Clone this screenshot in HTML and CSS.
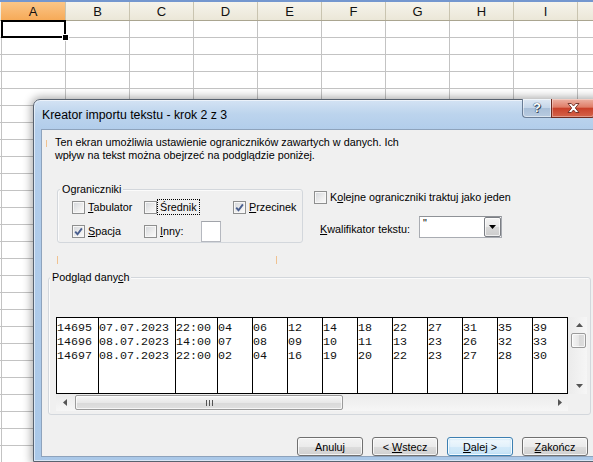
FILE: index.html
```html
<!DOCTYPE html>
<html lang="pl">
<head>
<meta charset="utf-8">
<title>Kreator importu tekstu</title>
<link rel="stylesheet" href="styles.css">
</head>
<body>
<div class="sheet">
  <div class="colheads">
    <div class="ch ch-sel">A</div><div class="ch">B</div><div class="ch">C</div><div class="ch">D</div><div class="ch">E</div><div class="ch">F</div><div class="ch">G</div><div class="ch">H</div><div class="ch">I</div><div class="ch"></div>
  </div>
  <div class="grid"></div>
  <div class="active"><span class="handle"></span></div>
</div>

<div class="dialog">
  <div class="titlebar">
    <span class="title">Kreator importu tekstu - krok 2 z 3</span>
    <div class="caption-btns">
      <div class="cap-help">?</div>
      <div class="cap-close">
        <svg width="13" height="10" viewBox="0 0 13 10"><path d="M1 0.5 L4.3 0.5 L6.5 3 L8.7 0.5 L12 0.5 L8.3 5 L12 9.5 L8.7 9.5 L6.5 7 L4.3 9.5 L1 9.5 L4.7 5 Z" fill="#fff" stroke="#6b2a20" stroke-width="0.9" stroke-linejoin="round"/></svg>
      </div>
    </div>
  </div>
  <div class="client">
    <div class="desc">
      <span class="tick tick-desc"></span>
      <p class="desc-text">Ten ekran umożliwia ustawienie ograniczników zawartych w danych. Ich<br>wpływ na tekst można obejrzeć na podglądzie poniżej.</p>
    </div>

    <div class="opts">
      <div class="group delims">
        <span class="legend">Ograniczniki</span>
        <div class="delim-grid">
          <label class="chk"><span class="cb"></span><span><u>T</u>abulator</span></label>
          <label class="chk chk-focus"><span class="cb"></span><span class="focus">Średnik</span></label>
          <label class="chk"><span class="cb"><svg class="tickmark" viewBox="0 0 11 11"><path d="M2.2 5.6 L4.5 8.2 L8.9 2.4" fill="none" stroke="#4a5f8f" stroke-width="1.9"/></svg></span><span><u>P</u>rzecinek</span></label>
          <label class="chk"><span class="cb"><svg class="tickmark" viewBox="0 0 11 11"><path d="M2.2 5.6 L4.5 8.2 L8.9 2.4" fill="none" stroke="#4a5f8f" stroke-width="1.9"/></svg></span><span><u>S</u>pacja</span></label>
          <label class="chk"><span class="cb"></span><span><u>I</u>nny:</span><span class="other-box"></span></label>
        </div>
      </div>
      <div class="right">
        <label class="chk"><span class="cb"></span><span>K<u>o</u>lejne ograniczniki traktuj jako jeden</span></label>
        <div class="kwal">
          <span class="kwal-label"><u>K</u>walifikator tekstu:</span>
          <div class="combo">
            <span class="combo-val">"</span>
            <span class="combo-btn"><svg width="7" height="4" viewBox="0 0 7 4"><path d="M0 0 H7 L3.5 4 Z" fill="#000"/></svg></span>
          </div>
        </div>
      </div>
    </div>

    <div class="ticks"><span class="tick"></span><span class="tick tick-2"></span></div>

    <div class="group preview">
      <span class="legend">Podgląd dany<u>c</u>h</span>
      <div class="scroller">
        <div class="data">
          <div class="col c6">14695
14696
14697</div>
          <div class="col c11">07.07.2023
08.07.2023
08.07.2023</div>
          <div class="col c6">22:00
14:00
22:00</div>
          <div class="col c5">04
07
02</div>
          <div class="col c5">06
08
04</div>
          <div class="col c5">12
09
16</div>
          <div class="col c5">14
10
19</div>
          <div class="col c5">18
11
20</div>
          <div class="col c5">22
13
22</div>
          <div class="col c5">27
23
23</div>
          <div class="col c5">31
26
27</div>
          <div class="col c5">35
32
28</div>
          <div class="col c5">39
33
30</div>
        </div>
        <div class="vscroll">
          <span class="sb-btn sb-up"><svg width="7" height="4" viewBox="0 0 7 4"><path d="M0 4 H7 L3.5 0 Z" fill="#555"/></svg></span>
          <span class="vthumb"></span>
          <span class="sb-btn sb-down"><svg width="7" height="4" viewBox="0 0 7 4"><path d="M0 0 H7 L3.5 4 Z" fill="#555"/></svg></span>
        </div>
        <div class="hscroll">
          <span class="sb-btn sb-left"><svg width="4" height="7" viewBox="0 0 4 7"><path d="M4 0 V7 L0 3.5 Z" fill="#555"/></svg></span>
          <span class="hthumb"><svg width="7" height="6" viewBox="0 0 7 6"><path d="M0.5 0 V6 M3.5 0 V6 M6.5 0 V6" stroke="#555" stroke-width="1"/></svg></span>
          <span class="sb-btn sb-right"><svg width="4" height="7" viewBox="0 0 4 7"><path d="M0 0 V7 L4 3.5 Z" fill="#555"/></svg></span>
        </div>
        <div class="corner"></div>
      </div>
    </div>

    <div class="buttons">
      <button class="btn">Anuluj</button>
      <button class="btn">&lt; <u>W</u>stecz</button>
      <button class="btn btn-default"><u>D</u>alej &gt;</button>
      <button class="btn"><u>Z</u>akończ</button>
    </div>
  </div>
</div>
</body>
</html>
```

FILE: styles.css
```css
html, body {
  margin: 0;
  padding: 0;
  overflow: hidden;
}

body {
  width: 593px;
  height: 462px;
  position: relative;
  background: #fff;
  font-family: "Liberation Sans", Arial, sans-serif;
  font-size: 10.8px;
  color: #000;
}

/* ---------- spreadsheet ---------- */
.sheet {
  position: relative;
  height: 462px;
  display: flex;
  flex-direction: column;
  overflow: hidden;
}

.colheads {
  display: flex;
  height: 18px;
  border-top: 2px solid #7497cf;
  border-bottom: 1px solid #aaa590;
  padding-left: 1px;
  background: linear-gradient(#f6f4ec, #ebe7d8);
  flex: none;
}

.ch {
  width: 64px;
  flex: none;
  box-sizing: border-box;
  border-right: 1px solid #c9c4b0;
  text-align: center;
  font-size: 13px;
  line-height: 19px;
  color: #111;
}

.ch:first-child {
  width: 65px;
}

.ch-sel {
  background: linear-gradient(#fbc688, #f6aa58);
}

.grid {
  flex: 1;
  background-image:
    linear-gradient(to right, transparent 63px, #c3c3c3 63px),
    linear-gradient(to bottom, transparent 16px, #c3c3c3 16px);
  background-size: 64px 100%, 100% 17px;
  background-position: 2px 0, 0 0;
}

.active {
  position: absolute;
  left: 1px;
  top: 20px;
  width: 65px;
  height: 18px;
  box-sizing: border-box;
  border: 2px solid #000;
}

.handle {
  position: absolute;
  right: -4px;
  bottom: -4px;
  width: 5px;
  height: 5px;
  background: #000;
  box-shadow: 0 0 0 1px #fff;
}

/* ---------- dialog ---------- */
.dialog {
  position: absolute;
  left: 33px;
  top: 99px;
  width: 570px;
  height: 363px;
  box-sizing: border-box;
  border: 1px solid #58626f;
  border-radius: 7px 7px 0 0;
  background: linear-gradient(180deg, #d4e3f4 0, #bcd4ed 14px, #b2cdeb 29px, #aac8e8 100%);
  box-shadow: 0 0 9px 2px rgba(0, 0, 0, 0.33), inset 0 0 0 1px rgba(255, 255, 255, 0.55);
  padding: 0 7px 4px;
  display: flex;
  flex-direction: column;
}

.titlebar {
  height: 29px;
  flex: none;
  display: flex;
  align-items: center;
  justify-content: space-between;
  padding-left: 1px;
}

.title {
  font-size: 12.3px;
  color: #000;
  padding-top: 1px;
}

.caption-btns {
  align-self: flex-start;
  margin-top: -1px;
  display: flex;
  height: 19px;
}

.cap-help {
  width: 29px;
  box-sizing: border-box;
  border: 1px solid #6a7d96;
  border-top: none;
  border-right: none;
  border-radius: 0 0 0 4px;
  background: linear-gradient(#dfe9f4, #c4d5e8 50%, #a9bfd8 51%, #b8cbe0);
  box-shadow: inset 0 0 0 1px rgba(255, 255, 255, 0.5);
  color: #fff;
  font-weight: bold;
  font-size: 13px;
  line-height: 18px;
  text-align: center;
  text-shadow: 0 0 1px #2c3e56, 0 0 1px #2c3e56, 1px 1px 0 #3d4f66;
}

.cap-close {
  width: 44px;
  box-sizing: border-box;
  border: 1px solid #6e2a1f;
  border-top: none;
  border-radius: 0 0 4px 0;
  background: linear-gradient(#ecb2a4, #df7e68 45%, #c9412a 52%, #d4634a);
  box-shadow: inset 0 0 0 1px rgba(255, 255, 255, 0.35);
  display: flex;
  align-items: center;
  justify-content: center;
}

.cap-close svg {
  display: block;
}

.client {
  flex: 1;
  border: 1px solid #8ea3bc;
  background: #f0f0f0;
  display: flex;
  flex-direction: column;
  min-height: 0;
}

.desc {
  display: flex;
  margin: 6px 0 0 4px;
  height: 26px;
}

.tick {
  display: block;
  width: 1px;
  height: 8px;
  background: #f0c290;
}

.tick-desc {
  margin-top: 4px;
  height: 7px;
}

.desc-text {
  margin: 0 0 0 8px;
  line-height: 13px;
}

/* ---------- options ---------- */
.opts {
  display: flex;
  margin: 27px 0 0 15px;
  gap: 11px;
}

.group {
  box-sizing: border-box;
  border: 1px solid #d3d7dc;
  border-radius: 3px;
  box-shadow: inset 1px 1px 0 #fbfbfb;
  display: flex;
  flex-direction: column;
}

.legend {
  display: block;
  width: max-content;
  background: #f0f0f0;
  padding: 0 2px;
  line-height: 13px;
  margin-top: -7px;
}

.delims {
  width: 246px;
  height: 54px;
  padding-left: 14px;
}

.delims .legend {
  margin-left: -12px;
  margin-bottom: -1px;
}

.delim-grid {
  display: grid;
  grid-template-columns: 72px 89px auto;
  grid-template-rows: 24px 24px;
  align-items: center;
}

.chk {
  display: flex;
  align-items: center;
  gap: 3px;
  line-height: 13px;
}

.chk-focus {
  gap: 0;
}

.cb {
  width: 13px;
  height: 13px;
  flex: none;
  box-sizing: border-box;
  border: 1px solid #8e8f8f;
  background: linear-gradient(135deg, #d3d6da 0%, #eeeeee 60%, #fbfbfb 100%);
  box-shadow: inset 0 0 0 1px #f7f7f7;
}

.tickmark {
  display: block;
  width: 11px;
  height: 11px;
}

.focus {
  border: 1px dotted #000;
  padding: 1px 2px;
  line-height: 12px;
}

.other-box {
  width: 20px;
  height: 21px;
  box-sizing: border-box;
  margin-left: 15px;
  background: #fff;
  border: 1px solid #b5b8bf;
  border-top-color: #a1a4aa;
}

.right {
  display: flex;
  flex-direction: column;
  padding-top: 2px;
}

.kwal {
  display: flex;
  align-items: flex-start;
  margin-top: 12px;
  padding-left: 6px;
}

.kwal-label {
  width: 99px;
  line-height: 13px;
  margin-top: 7px;
}

.combo {
  width: 83px;
  height: 22px;
  box-sizing: border-box;
  border: 1px solid #a9acb2;
  border-top-color: #8f9297;
  background: #fff;
  display: flex;
}

.combo-val {
  flex: 1;
  padding: 1px 0 0 3px;
  line-height: 11px;
}

.combo-btn {
  width: 17px;
  box-sizing: border-box;
  border: 1px solid #7b7e84;
  border-radius: 2px;
  background: linear-gradient(#f4f4f4, #e8e8e8 50%, #d8d8d8 51%, #cdcdcd);
  box-shadow: inset 0 0 0 1px rgba(255, 255, 255, 0.7);
  display: flex;
  align-items: center;
  justify-content: center;
}

.combo-btn svg {
  display: block;
}

.ticks {
  display: flex;
  margin: 13px 0 0 15px;
  height: 8px;
}

.tick-2 {
  margin-left: 218px;
}

/* ---------- preview ---------- */
.preview {
  width: 543px;
  height: 138px;
  margin: 13px 0 0 6px;
  padding-left: 7px;
}

.preview .legend {
  margin-left: -6px;
  margin-bottom: 33px;
}

.scroller {
  display: grid;
  grid-template-columns: 512px 19px;
  grid-template-rows: 77px 17px;
}

.data {
  display: flex;
  box-sizing: border-box;
  border: 1px solid #000;
  border-left: none;
  background: #fff;
  font-family: "Liberation Mono", "Courier New", monospace;
  font-size: 11.67px;
  line-height: 14px;
  color: #111;
}

.col {
  box-sizing: border-box;
  border-left: 1px solid #000;
  padding-top: 3px;
  white-space: pre;
  overflow: hidden;
}

.c5 { width: 35px; }
.c6 { width: 42px; }
.c11 { width: 77px; }

.vscroll {
  display: flex;
  flex-direction: column;
  background: linear-gradient(to right, #ebebeb, #f6f6f6);
}

.sb-btn {
  display: flex;
  align-items: center;
  justify-content: center;
  flex: none;
}

.sb-btn svg {
  display: block;
}

.sb-up,
.sb-down {
  height: 16px;
  padding-left: 3px;
}

.sb-down {
  margin-top: auto;
}

.vthumb {
  width: 15px;
  height: 15px;
  margin-left: 3px;
  box-sizing: border-box;
  border: 1px solid #9a9a9a;
  border-radius: 2px;
  background: linear-gradient(to right, #f5f5f5, #e6e6e6 50%, #d8d8d8 51%, #dedede);
  box-shadow: inset 0 0 0 1px rgba(255, 255, 255, 0.7);
}

.hscroll {
  display: flex;
  align-items: flex-start;
  background: linear-gradient(#ebebeb, #f6f6f6);
}

.sb-left,
.sb-right {
  width: 17px;
  height: 17px;
}

.sb-right {
  margin-left: auto;
}

.hthumb {
  width: 268px;
  height: 15px;
  margin: 1px 0 0 2px;
  box-sizing: border-box;
  border: 1px solid #9a9a9a;
  border-radius: 2px;
  background: linear-gradient(#f6f6f6, #e8e8e8 50%, #d9d9d9 51%, #e0e0e0);
  box-shadow: inset 0 0 0 1px rgba(255, 255, 255, 0.7);
  display: flex;
  align-items: center;
  justify-content: center;
}

.hthumb svg {
  display: block;
}

.corner {
  background: #f0f0f0;
}

/* ---------- buttons ---------- */
.buttons {
  display: flex;
  justify-content: flex-end;
  gap: 9px;
  margin-top: 22px;
  padding-right: 6px;
}

.btn {
  width: 66px;
  height: 19px;
  box-sizing: border-box;
  margin: 0;
  padding: 0;
  border: 1px solid #707070;
  border-radius: 3px;
  background: linear-gradient(#f3f3f3, #ebebeb 50%, #dddddd 51%, #d0d0d0);
  box-shadow: inset 0 0 0 1px rgba(255, 255, 255, 0.75);
  font-family: "Liberation Sans", Arial, sans-serif;
  font-size: 10.8px;
  line-height: 16px;
  color: #000;
  text-align: center;
}

.btn-default {
  border-color: #3c7fb1;
  background: linear-gradient(#f2f9fd, #e2f1fb 50%, #d3eaf9 51%, #c9e4f6);
  box-shadow: inset 0 0 0 1px rgba(255, 255, 255, 0.85), inset 0 0 2px 1px #a9d8f5;
}
```
